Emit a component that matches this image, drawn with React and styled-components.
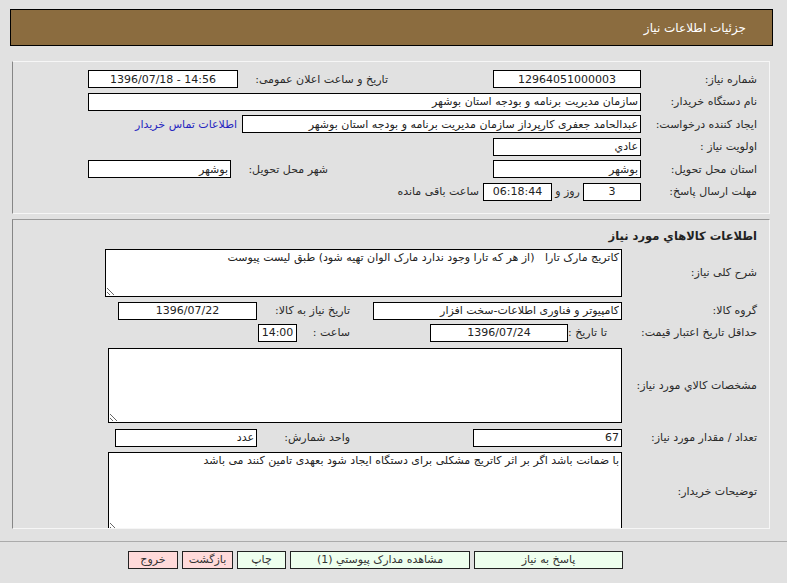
import React from "react";
import styled, { createGlobalStyle } from "styled-components";

const GlobalStyle = createGlobalStyle`
  html, body { margin: 0; padding: 0; background: #e1e1e1; }
  body { font-family: "DejaVu Sans", sans-serif; font-size: 11px; color: #222; }
`;

const Page = styled.div`
  direction: rtl;
  width: 787px;
  height: 583px;
  overflow: hidden;
  padding-top: 9px;
  box-sizing: border-box;
`;

const Header = styled.div`
  margin: 0 14px 0 10px;
  height: 37px;
  box-sizing: border-box;
  border: 1px solid #000;
  background: #8b6c3f;
  color: #fff;
  font-size: 12px;
  display: flex;
  align-items: center;
  padding-right: 26px;
`;

const Panel = styled.div`
  margin: ${(p) => p.$mt}px 17px 0 12px;
  box-sizing: border-box;
  border: 1px solid #f6f6f6;
  border-left-color: #868686;
  border-top-color: ${(p) => (p.$darkTop ? "#9a9a9a" : "#f6f6f6")};
  padding: ${(p) => p.$pt}px 12px ${(p) => p.$pb}px 0;
  display: flex;
  flex-direction: column;
  gap: ${(p) => p.$gap || 0}px;
  height: ${(p) => (p.$h ? `${p.$h}px` : "auto")};
  overflow: hidden;
`;

const Row = styled.div`
  display: flex;
  align-items: center;
  height: ${(p) => p.$h || 18}px;
  margin-top: ${(p) => p.$mt || 0}px;
  flex-shrink: 0;
`;

const Label = styled.div`
  width: ${(p) => p.$w}px;
  flex-shrink: 0;
  text-align: ${(p) => p.$align || "right"};
  white-space: nowrap;
  color: #2a2a2a;
`;

const Spacer = styled.div`
  width: ${(p) => p.$w}px;
  flex-shrink: 0;
`;

const Field = styled.input`
  width: ${(p) => p.$w}px;
  height: 18px;
  box-sizing: border-box;
  flex-shrink: 0;
  border: 1px solid #000;
  background: #fff;
  font: inherit;
  color: #222;
  padding: 0 2px;
  margin: 0;
  outline: none;
  text-align: ${(p) => (p.$center ? "center" : "right")};
`;

const Area = styled.textarea`
  width: ${(p) => p.$w}px;
  height: ${(p) => p.$h}px;
  box-sizing: border-box;
  flex-shrink: 0;
  border: 1px solid #000;
  background: #fff;
  font: inherit;
  color: #222;
  padding: 1px 2px;
  margin: 0;
  outline: none;
  resize: both;
  overflow: hidden;
  direction: rtl;
`;

const Link = styled.a`
  color: #2626c0;
  margin-right: 5px;
  text-decoration: none;
  white-space: nowrap;
`;

const Text = styled.span`
  margin: 0 ${(p) => p.$m || 4}px;
  white-space: nowrap;
  color: #2a2a2a;
`;

const Heading = styled.div`
  height: 18px;
  line-height: 18px;
  font-weight: bold;
  font-size: 11.5px;
  color: #222;
  flex-shrink: 0;
`;

const Footer = styled.div`
  margin-top: 12px;
  border-top: 1px solid #ababab;
  padding: 9px 164px 0 0;
  display: flex;
  gap: 4px;
`;

const Button = styled.button`
  width: ${(p) => p.$w}px;
  height: 18px;
  box-sizing: border-box;
  border: 1px solid #222;
  background: ${(p) => (p.$tone === "red" ? "#ffdada" : "#eeffee")};
  font-family: "DejaVu Sans", sans-serif;
  font-size: 11px;
  color: #333;
  padding: 0;
  margin: 0;
  direction: rtl;
`;

export default function App() {
  return (
    <>
      <GlobalStyle />
      <Page>
        <Header>جزئیات اطلاعات نیاز</Header>

        <Panel $mt={15} $pt={8} $pb={12} $gap={4.5}>
          <Row>
            <Label $w={116}>شماره نیاز:</Label>
            <Field $w={148} $center readOnly value="12964051000003" />
            <Spacer $w={105} />
            <Label $w={150}>تاریخ و ساعت اعلان عمومی:</Label>
            <Field $w={150} $center dir="ltr" readOnly value="1396/07/18 - 14:56" />
          </Row>
          <Row>
            <Label $w={116}>نام دستگاه خریدار:</Label>
            <Field $w={553} readOnly value="سازمان مدیریت برنامه و بودجه استان بوشهر" />
          </Row>
          <Row>
            <Label $w={116}>ایجاد کننده درخواست:</Label>
            <Field $w={399} readOnly value="عبدالحامد جعفری کارپرداز سازمان مدیریت برنامه و بودجه استان بوشهر" />
            <Link href="#">اطلاعات تماس خریدار</Link>
          </Row>
          <Row>
            <Label $w={116}>اولویت نیاز :</Label>
            <Field $w={148} readOnly value="عادي" />
          </Row>
          <Row>
            <Label $w={116}>استان محل تحویل:</Label>
            <Field $w={148} readOnly value="بوشهر" />
            <Spacer $w={165} />
            <Label $w={97}>شهر محل تحویل:</Label>
            <Field $w={143} readOnly value="بوشهر" />
          </Row>
          <Row>
            <Label $w={116}>مهلت ارسال پاسخ:</Label>
            <Field $w={58} $center readOnly value="3" />
            <Label $w={31} $align="center">روز و</Label>
            <Field $w={69} $center dir="ltr" readOnly value="06:18:44" />
            <Text $m={4}>ساعت باقی مانده</Text>
          </Row>
        </Panel>

        <Panel $mt={5} $pt={7} $pb={0} $h={310} $darkTop>
          <Heading>اطلاعات کالاهاي مورد نیاز</Heading>
          <Row $h={48} $mt={4}>
            <Label $w={135}>شرح کلی نیاز:</Label>
            <Area
              $w={517}
              $h={48}
              readOnly
              value="کاتریج مارک تارا   (از هر که تارا وجود ندارد مارک الوان تهیه شود) طبق لیست پیوست"
            />
          </Row>
          <Row $mt={5}>
            <Label $w={135}>گروه کالا:</Label>
            <Field $w={249} readOnly value="کامپیوتر و فناوری اطلاعات-سخت افزار" />
            <Spacer $w={23} />
            <Label $w={93}>تاریخ نیاز به کالا:</Label>
            <Field $w={139} $center dir="ltr" readOnly value="1396/07/22" />
          </Row>
          <Row $mt={4}>
            <Label $w={150}>حداقل تاریخ اعتبار قیمت:</Label>
            <Label $w={39}>تا تاریخ :</Label>
            <Field $w={138} $center dir="ltr" readOnly value="1396/07/24" />
            <Spacer $w={80} />
            <Label $w={53}>ساعت :</Label>
            <Field $w={39} $center dir="ltr" readOnly value="14:00" />
          </Row>
          <Row $h={75} $mt={6}>
            <Label $w={135}>مشخصات کالاي مورد نیاز:</Label>
            <Area $w={514} $h={75} readOnly value="" />
          </Row>
          <Row $mt={6}>
            <Label $w={135}>تعداد / مقدار مورد نیاز:</Label>
            <Field $w={149} readOnly value="67" />
            <Spacer $w={123} />
            <Label $w={93}>واحد شمارش:</Label>
            <Field $w={142} readOnly value="عدد" />
          </Row>
          <Row $h={80} $mt={5}>
            <Label $w={135}>توضیحات خریدار:</Label>
            <Area
              $w={514}
              $h={80}
              readOnly
              value="با ضمانت باشد اگر بر اثر کاتریج مشکلی برای دستگاه ایجاد شود بعهدی تامین کنند می باشد"
            />
          </Row>
        </Panel>

        <Footer>
          <Button $w={149}>پاسخ به نیاز</Button>
          <Button $w={180}>مشاهده مدارک پیوستي (1)</Button>
          <Button $w={49}>چاپ</Button>
          <Button $w={51} $tone="red">بازگشت</Button>
          <Button $w={50} $tone="red">خروج</Button>
        </Footer>
      </Page>
    </>
  );
}
